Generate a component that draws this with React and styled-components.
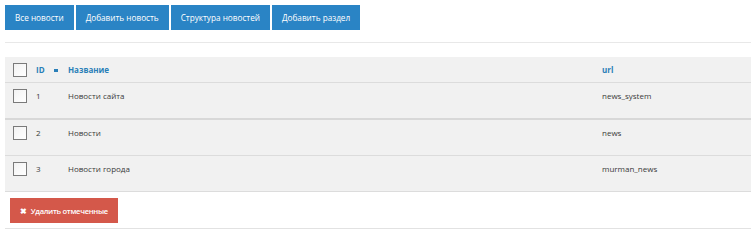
import React from "react";
import styled, { createGlobalStyle } from "styled-components";

const GlobalStyle = createGlobalStyle`
  body {
    margin: 0;
    background: #fff;
    font-family: "Open Sans", "Liberation Sans", sans-serif;
    color: #3a3a3a;
  }
`;

const Page = styled.div`
  padding: 5px 0 0 5px;
`;

const Toolbar = styled.div`
  display: flex;
  gap: 2px;
  padding-bottom: 12px;
  border-bottom: 1px solid #e8e8e8;
`;

const TopButton = styled.button`
  height: 25px;
  padding: 0 10px;
  border: none;
  background: #2a84c5;
  color: #fff;
  font-family: inherit;
  font-size: 8.2px;
  cursor: pointer;
`;

const Table = styled.table`
  width: 100%;
  margin-top: 14px;
  border-collapse: collapse;
  table-layout: fixed;
  background: #f1f1f1;
  font-size: 8px;
`;

const HeadCell = styled.th`
  text-align: left;
  padding: 0 0 0 ${(p) => p.$pad || 0}px;
  height: 25px;
  color: #2a7fb8;
  font-weight: 700;
  border-bottom: 1px solid #dcdcdc;
  vertical-align: middle;
`;

const Row = styled.tr`
  border-bottom: ${(p) => (p.$thick ? "2px solid #d8d8d8" : "1px solid #dcdcdc")};
`;

const Cell = styled.td`
  padding: 6px 0 0 ${(p) => p.$pad || 0}px;
  height: 29px;
  vertical-align: top;
  line-height: 14px;
`;

const Check = styled.span`
  display: inline-block;
  width: 12px;
  height: 12px;
  border: 1px solid #7a7a7a;
  background: linear-gradient(135deg, #f2f2f2, #fff);
  vertical-align: top;
`;

const SortMark = styled.span`
  display: inline-block;
  width: 4px;
  height: 3px;
  margin-left: 9px;
  background: #2a7fb8;
  vertical-align: middle;
`;

const Footer = styled.div`
  padding: 6px 0 5px 5px;
  border-bottom: 1px solid #e2e2e2;
`;

const DangerButton = styled.button`
  height: 25px;
  padding: 0 10px;
  border: none;
  background: #d4584a;
  color: #fff;
  font-family: inherit;
  font-size: 7.6px;
  font-weight: 600;
  letter-spacing: -0.3px;
  display: flex;
  align-items: center;
  gap: 4px;
`;

const rows = [
  { id: 1, name: "Новости сайта", url: "news_system" },
  { id: 2, name: "Новости", url: "news" },
  { id: 3, name: "Новости города", url: "murman_news" },
];

const App = () => (
  <>
    <GlobalStyle />
    <Page>
      <Toolbar>
        <TopButton>Все новости</TopButton>
        <TopButton>Добавить новость</TopButton>
        <TopButton>Структура новостей</TopButton>
        <TopButton>Добавить раздел</TopButton>
      </Toolbar>
      <Table>
        <colgroup>
          <col style={{ width: 31 }} />
          <col style={{ width: 32 }} />
          <col style={{ width: 534 }} />
          <col />
        </colgroup>
        <thead>
          <tr>
            <HeadCell $pad={8}><Check /></HeadCell>
            <HeadCell>
              ID<SortMark />
            </HeadCell>
            <HeadCell>Название</HeadCell>
            <HeadCell>url</HeadCell>
          </tr>
        </thead>
        <tbody>
          {rows.map((r, i) => (
            <Row key={r.id} $thick={i === 0}>
              <Cell $pad={8}><Check /></Cell>
              <Cell>{r.id}</Cell>
              <Cell>{r.name}</Cell>
              <Cell>{r.url}</Cell>
            </Row>
          ))}
        </tbody>
      </Table>
      <Footer>
        <DangerButton>
          <span>✖</span> Удалить отмеченные
        </DangerButton>
      </Footer>
    </Page>
  </>
);

export default App;
